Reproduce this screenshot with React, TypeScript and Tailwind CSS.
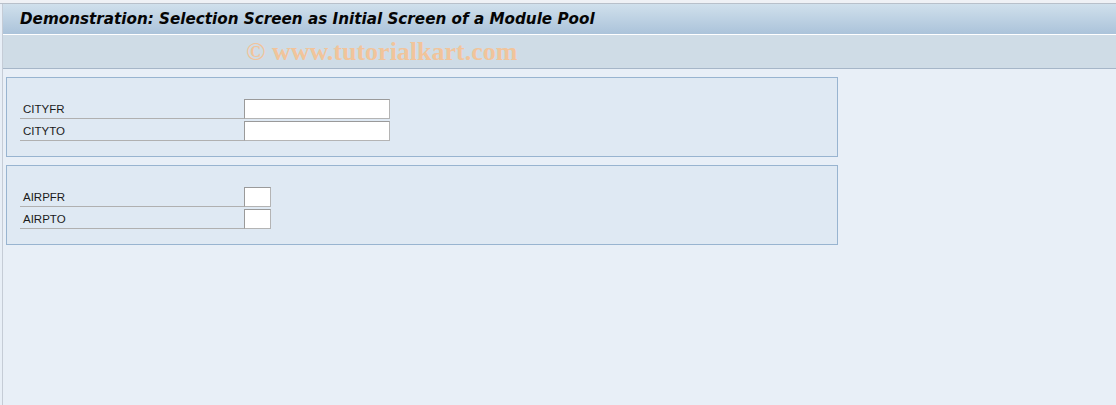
const sap = { fontFamily: "Tahoma, 'DejaVu Sans', 'Liberation Sans', sans-serif" };

type Field = { label: string; width: string };

function FieldRow({ label, width }: Field) {
  return (
    <div className="flex h-[20px] mb-[2px]">
      <div
        className="w-[224px] h-[20px] border-b border-[#b0b0b0] pl-[3px] text-[11.5px] leading-[21px] text-[#1b1b1b]"
        style={{ fontFamily: "'Liberation Sans', Arial, sans-serif" }}
      >
        {label}
      </div>
      <div
        className={`${width} h-[20px] bg-white border border-[#b4b4b4] border-t-[#9a9a9a] border-l-[#9a9a9a]`}
      />
    </div>
  );
}

function Block({ fields }: { fields: Field[] }) {
  return (
    <div className="w-[832px] h-[80px] bg-[#dfe9f3] border border-[#98b4d0] pt-[21px] pl-[13px]">
      {fields.map((f) => (
        <FieldRow key={f.label} {...f} />
      ))}
    </div>
  );
}

export default function App() {
  return (
    <div className="w-[1116px] h-[405px] bg-[#e8eff7] flex flex-col overflow-hidden" style={sap}>
      <div className="h-[4px] bg-[#eff1f5] border-b border-[#b8c0ca]" />
      <div className="flex-1 ml-[2px] border-l border-[#c5ccd6] flex flex-col">
        <div className="h-[31px] bg-gradient-to-b from-[#d0e0ec] to-[#abc3da] border-b border-white flex items-center pl-[17px]">
          <span
            className="text-[15.2px] font-bold italic text-[#050505]"
            style={{ fontFamily: "'DejaVu Sans', Verdana, sans-serif" }}
          >
            Demonstration: Selection Screen as Initial Screen of a Module Pool
          </span>
        </div>
        <div className="h-[34px] bg-[#cfdce6] border-b border-[#a6b6c8] flex items-center pl-[243px]">
          <span
            className="text-[26px] font-bold text-[#f1c49b] leading-none"
            style={{ fontFamily: "'Liberation Serif', 'Times New Roman', serif" }}
          >
            © www.tutorialkart.com
          </span>
        </div>
        <div className="pt-[8px] pl-[3px] flex flex-col gap-[8px]">
          <Block
            fields={[
              { label: "CITYFR", width: "w-[146px]" },
              { label: "CITYTO", width: "w-[146px]" },
            ]}
          />
          <Block
            fields={[
              { label: "AIRPFR", width: "w-[27px]" },
              { label: "AIRPTO", width: "w-[27px]" },
            ]}
          />
        </div>
      </div>
    </div>
  );
}
